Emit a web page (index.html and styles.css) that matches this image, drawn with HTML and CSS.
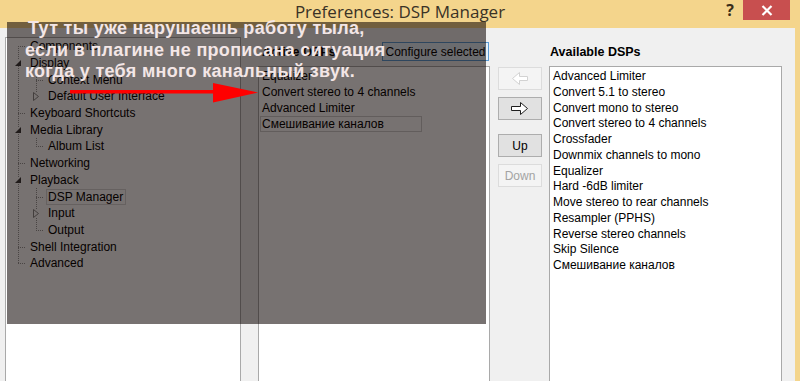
FILE: index.html
```html
<!DOCTYPE html>
<html lang="ru">
  <head>
    <meta charset="UTF-8" />
    <title>Preferences: DSP Manager</title>
    <link rel="stylesheet" href="styles.css">
  </head>
  <body>
    <div class="window">
      <header class="titlebar">
        <h1 class="title">Preferences: DSP Manager</h1>
        <div class="caption-buttons">
          <span class="help">?</span>
          <span class="close">
            <svg width="12" height="11" viewBox="0 0 12 11"><path d="M1.5 1 L10.5 10 M10.5 1 L1.5 10" stroke="#fff" stroke-width="2.2" fill="none"/></svg>
          </span>
        </div>
      </header>

      <div class="client">
        <!-- preferences tree -->
        <div class="tree-panel">
          <ul class="tree">
            <li><div class="row"><span class="twisty stub"></span><span class="label">Components</span></div></li>
            <li>
              <div class="row"><span class="twisty open"><svg width="6" height="6"><path d="M6 0 V6 H0 Z" fill="#3c3c3c"/></svg></span><span class="label">Display</span></div>
              <ul class="children">
                <li><div class="row child"><span class="twisty stub"></span><span class="label">Context Menu</span></div></li>
                <li><div class="row child"><span class="twisty shut"><svg width="6" height="9"><path d="M0.5 0.5 L5.5 4.5 L0.5 8.5 Z" fill="#fff" stroke="#8a8a8a"/></svg></span><span class="label">Default User Interface</span></div></li>
              </ul>
            </li>
            <li><div class="row"><span class="twisty stub"></span><span class="label">Keyboard Shortcuts</span></div></li>
            <li>
              <div class="row"><span class="twisty open"><svg width="6" height="6"><path d="M6 0 V6 H0 Z" fill="#3c3c3c"/></svg></span><span class="label">Media Library</span></div>
              <ul class="children">
                <li><div class="row child"><span class="twisty stub"></span><span class="label">Album List</span></div></li>
              </ul>
            </li>
            <li><div class="row"><span class="twisty stub"></span><span class="label">Networking</span></div></li>
            <li>
              <div class="row"><span class="twisty open"><svg width="6" height="6"><path d="M6 0 V6 H0 Z" fill="#3c3c3c"/></svg></span><span class="label">Playback</span></div>
              <ul class="children">
                <li><div class="row child"><span class="twisty stub"></span><span class="label selected">DSP Manager</span></div></li>
                <li><div class="row child"><span class="twisty shut"><svg width="6" height="9"><path d="M0.5 0.5 L5.5 4.5 L0.5 8.5 Z" fill="#fff" stroke="#8a8a8a"/></svg></span><span class="label">Input</span></div></li>
                <li><div class="row child"><span class="twisty stub"></span><span class="label">Output</span></div></li>
              </ul>
            </li>
            <li><div class="row"><span class="twisty stub"></span><span class="label">Shell Integration</span></div></li>
            <li><div class="row"><span class="twisty stub"></span><span class="label">Advanced</span></div></li>
          </ul>
        </div>

        <!-- active chain -->
        <section class="active">
          <div class="section-head">
            <span class="caption">Active DSPs</span>
            <button class="configure">Configure selected</button>
          </div>
          <ul class="list">
            <li>Equalizer</li>
            <li>Convert stereo to 4 channels</li>
            <li>Advanced Limiter</li>
            <li><span class="focus">Смешивание каналов</span></li>
          </ul>
        </section>

        <div class="move-buttons">
          <button class="btn" disabled>
            <svg width="18" height="14" viewBox="0 0 18 14"><path d="M16.5 4.5 H8.5 V0.5 L1.5 6.5 L8.5 12.5 V8.5 H16.5 Z" fill="#fff" stroke="#d2d2d2"/></svg>
          </button>
          <button class="btn">
            <svg width="18" height="14" viewBox="0 0 18 14"><path d="M0.5 4.5 H9.5 V0.5 L16.5 6.5 L9.5 12.5 V8.5 H0.5 Z" fill="#fff" stroke="#1e1e1e"/></svg>
          </button>
          <button class="btn up">Up</button>
          <button class="btn down" disabled>Down</button>
        </div>

        <!-- available list -->
        <section class="available">
          <div class="section-head">
            <span class="caption">Available DSPs</span>
          </div>
          <ul class="list">
            <li>Advanced Limiter</li>
            <li>Convert 5.1 to stereo</li>
            <li>Convert mono to stereo</li>
            <li>Convert stereo to 4 channels</li>
            <li>Crossfader</li>
            <li>Downmix channels to mono</li>
            <li>Equalizer</li>
            <li>Hard -6dB limiter</li>
            <li>Move stereo to rear channels</li>
            <li>Resampler (PPHS)</li>
            <li>Reverse stereo channels</li>
            <li>Skip Silence</li>
            <li>Смешивание каналов</li>
          </ul>
        </section>
      </div>

      <!-- annotation laid over the dialog -->
      <div class="note">
        <p>Тут ты уже нарушаешь работу тыла,<br>если в плагине не прописана ситуация<br>когда у тебя много канальный звук.</p>
        <svg class="arrow" width="190" height="20" viewBox="0 0 190 20">
          <rect x="0" y="7" width="146" height="3.5" fill="#ff0000"/>
          <path d="M143 0 L188 9.5 L143 19.5 Z" fill="#ff0000"/>
        </svg>
      </div>
    </div>
  </body>
</html>
```

FILE: styles.css
```css
:root {
  --frame: #f4d58c;
  --face: #f0f0f0;
  --line: #a9a9a9;
  --ui-font: "Liberation Sans", Arial, sans-serif;
}

* {
  box-sizing: border-box;
}

body {
  margin: 0;
  background: var(--face);
  font-family: var(--ui-font);
  font-size: 12px;
  color: #000;
}

.window {
  position: relative;
  width: 800px;
  height: 381px;
  overflow: hidden;
  display: flex;
  flex-direction: column;
  background: var(--frame);
}

/* ───────────  title bar  ─────────── */
.titlebar {
  flex: none;
  height: 28px;
  display: grid;
  grid-template-columns: 1fr auto 1fr;
  align-items: start;
}

.title {
  grid-column: 2;
  margin: 0;
  padding-top: 1px;
  font-family: "Open Sans", sans-serif;
  font-size: 17px;
  font-weight: 400;
  line-height: 22px;
  color: #3a3226;
}

.caption-buttons {
  grid-column: 3;
  justify-self: end;
  display: flex;
  margin-right: 10px;
}

.help {
  width: 26px;
  text-align: center;
  font-family: "Open Sans", sans-serif;
  font-size: 16px;
  font-weight: 700;
  line-height: 20px;
  color: #3a2e1a;
}

.close {
  width: 47px;
  height: 20px;
  display: grid;
  place-items: center;
  background: #c84f4f;
}

/* ───────────  client area  ─────────── */
.client {
  flex: 1;
  display: flex;
  margin-right: 5px;
  padding-left: 5px;
  background: var(--face);
  overflow: hidden;
}

.tree-panel {
  width: 236px;
  margin: 9px 0 -6px;
  background: #fff;
  border: 1px solid var(--line);
}

.tree,
.children {
  margin: 0;
  padding: 0;
  list-style: none;
}

.tree {
  background: repeating-linear-gradient(to bottom, #9a9a9a 0 1px, transparent 1px 2px) 12px 8px / 1px calc(100% - 16.7px) no-repeat;
}

.children {
  background: repeating-linear-gradient(to bottom, #9a9a9a 0 1px, transparent 1px 2px) 30px 0 / 1px calc(100% - 8.4px) no-repeat;
}

.row {
  height: 16.7px;
  display: flex;
  align-items: center;
  padding-left: 6px;
  white-space: nowrap;
}

.row.child {
  padding-left: 24px;
}

.twisty {
  position: relative;
  width: 12px;
  height: 100%;
  display: grid;
  place-items: center;
}

.twisty svg {
  background: #fff;
}

.twisty.stub::after {
  content: "";
  position: absolute;
  left: 6px;
  top: 50%;
  width: 7px;
  border-top: 1px dotted #9a9a9a;
}

.label {
  margin-left: 4px;
  padding: 0 1px;
  border: 1px solid transparent;
  line-height: 14px;
}

.label.selected {
  border-color: #d8d8d8;
  padding: 0 2px 0 1px;
}

/* ───────────  DSP lists  ─────────── */
.active,
.available {
  display: flex;
  flex-direction: column;
  padding-top: 14px;
}

.active {
  width: 232px;
  margin-left: 17px;
}

.available {
  width: 233px;
}

.section-head {
  height: 19px;
  margin-bottom: 5px;
  display: flex;
  align-items: center;
  justify-content: space-between;
}

.caption {
  padding-left: 1px;
  font-size: 12.5px;
  font-weight: 700;
}

.active .caption {
  padding-left: 4px;
}

.configure {
  width: 107px;
  height: 19px;
  margin-right: 1px;
  padding: 0;
  border: 1px solid #5b9bd5;
  background: #e5f1fb;
  font-family: var(--ui-font);
  font-size: 12px;
  color: #000;
  text-align: center;
}

.list {
  flex: 1;
  margin: 0 0 -6px;
  padding: 2px 0 0;
  list-style: none;
  background: #fff;
  border: 1px solid var(--line);
}

.list li {
  height: 15.75px;
  line-height: 15.75px;
  padding-left: 3px;
  white-space: nowrap;
}

.focus {
  display: inline-block;
  width: 162px;
  margin-left: -2px;
  padding-left: 1px;
  line-height: 14px;
  border: 1px solid #cfcfcf;
}

.move-buttons {
  width: 59px;
  padding: 39px 0 0 8px;
  display: flex;
  flex-direction: column;
}

.btn {
  width: 44px;
  height: 23px;
  margin-bottom: 7px;
  padding: 0;
  display: grid;
  place-items: center;
  border: 1px solid #adadad;
  background: #e1e1e1;
  font-family: var(--ui-font);
  font-size: 12px;
  color: #000;
}

.btn:nth-child(2) {
  margin-bottom: 14px;
}

.btn:disabled {
  border-color: #dcdcdc;
  background: #f4f4f4;
  color: #a3a3a3;
}

/* ───────────  annotation  ─────────── */
.note {
  position: absolute;
  left: 7px;
  top: 22px;
  width: 479px;
  height: 302px;
  padding-left: 18px;
  background: rgba(10, 1, 0, 0.555);
  color: #f3e6e6;
}

.note p {
  margin: -4px 0 0;
  font-family: "Liberation Sans", Arial, sans-serif;
  font-size: 18px;
  font-weight: 700;
  line-height: 21.7px;
  letter-spacing: 0.3px;
  white-space: nowrap;
  text-indent: 3px;
}

.arrow {
  display: block;
  margin-left: 45px;
}
```
